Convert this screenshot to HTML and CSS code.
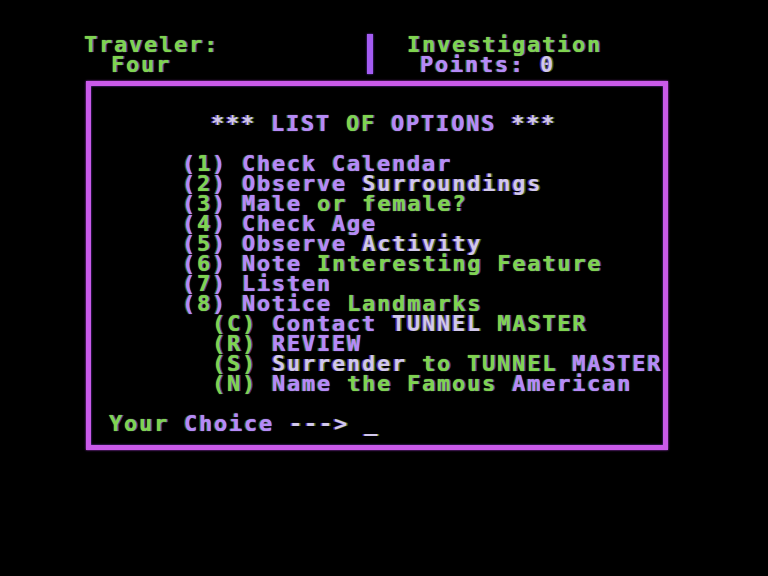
FILE: index.html
```html
<!DOCTYPE html>
<html>
<head>
<meta charset="utf-8">
<link rel="stylesheet" href="styles.css">
</head>
<body>
<div class="screen">
  <div class="header">
    <div class="hleft">
      <div class="line ind-trav"><span class="g">Traveler:</span></div>
      <div class="line ind-four"><span class="g">Four</span></div>
    </div>
    <div class="divider"></div>
    <div class="hright">
      <div class="line ind-inv"><span class="g">Investigation</span></div>
      <div class="line ind-pts"><span class="p">Points:</span> <span class="w">0</span></div>
    </div>
  </div>
  <div class="box">
    <div class="line ind-title"><span class="w">***</span> <span class="p">LIST</span> <span class="g">OF</span> <span class="p">OPTIONS</span> <span class="w">***</span></div>
    <div class="line"></div>
    <div class="line ind-opt"><span class="p">(</span><span class="g">1</span><span class="p">)</span> <span class="p">Check Calendar</span></div>
    <div class="line ind-opt"><span class="p">(</span><span class="g">2</span><span class="p">)</span> <span class="p">Observe</span> <span class="w">Surroundings</span></div>
    <div class="line ind-opt"><span class="p">(</span><span class="g">3</span><span class="p">)</span> <span class="p">Male</span> <span class="g">or female?</span></div>
    <div class="line ind-opt"><span class="p">(</span><span class="g">4</span><span class="p">)</span> <span class="p">Check Age</span></div>
    <div class="line ind-opt"><span class="p">(</span><span class="g">5</span><span class="p">)</span> <span class="p">Observe</span> <span class="w">Activity</span></div>
    <div class="line ind-opt"><span class="p">(</span><span class="g">6</span><span class="p">)</span> <span class="p">Note</span> <span class="g">Interesting Feature</span></div>
    <div class="line ind-opt"><span class="p">(</span><span class="g">7</span><span class="p">)</span> <span class="p">Listen</span></div>
    <div class="line ind-opt"><span class="p">(</span><span class="g">8</span><span class="p">)</span> <span class="p">Notice</span> <span class="g">Landmarks</span></div>
    <div class="line ind-cmd"><span class="g">(C)</span> <span class="p">Contact</span> <span class="w">TUNNEL</span> <span class="g">MASTER</span></div>
    <div class="line ind-cmd"><span class="g">(R)</span> <span class="p">REVIEW</span></div>
    <div class="line ind-cmd"><span class="g">(S)</span> <span class="w">Surrender</span> <span class="g">to TUNNEL</span> <span class="p">MASTER</span></div>
    <div class="line ind-cmd"><span class="g">(N)</span> <span class="p">Name</span> <span class="g">the Famous</span> <span class="p">American</span></div>
    <div class="line"></div>
    <div class="line ind-your"><span class="g">Your</span> <span class="p">Choice</span> <span class="w">---&gt;</span> <span class="w">_</span></div>
  </div>
</div>
</body>
</html>
```
FILE: styles.css
```css
html, body {
  margin: 0;
  padding: 0;
  background: #000;
}
.screen {
  width: 768px;
  height: 576px;
  background: #000;
  padding-top: 35px;
  box-sizing: border-box;
  font-family: "DejaVu Sans Mono", "Liberation Mono", monospace;
  font-weight: bold;
  font-size: 22px;
  letter-spacing: 1.76px;
}
.line {
  height: 20px;
  line-height: 20px;
  white-space: pre;
}
.header {
  display: flex;
  height: 40px;
}
.hleft {
  width: 367px;
}
.divider {
  width: 6px;
  height: 40px;
  margin-top: -1px;
  background: #a45cf2;
  box-shadow: 0 0 2px #7a40e0;
}
.hright {
  flex: 1;
}
.ind-trav { padding-left: 84px; }
.ind-four { padding-left: 111px; }
.ind-inv { padding-left: 34px; }
.ind-pts { padding-left: 47px; }

.box {
  margin-left: 86px;
  margin-top: 6px;
  width: 582px;
  height: 369px;
  box-sizing: border-box;
  border: 5px solid #c95ae9;
  box-shadow: 0 0 2px #b040e0, inset 0 0 2px #8040e0;
  padding-top: 28px;
}
.ind-title { padding-left: 120px; }
.ind-opt { padding-left: 91px; }
.ind-cmd { padding-left: 121px; }
.ind-your { padding-left: 18px; }

.g {
  color: #7fd34f;
  text-shadow: 1.5px 0 rgba(160, 90, 255, 0.55), 0 0 1px #7fd34f;
}
.p {
  color: #b58af8;
  text-shadow: -1.5px 0 rgba(110, 200, 70, 0.45), 0 0 1px #b58af8;
}
.w {
  color: #d2c8ec;
  text-shadow: -1.5px 0 rgba(160, 90, 255, 0.6), 1.5px 0 rgba(110, 200, 70, 0.5);
}
```
